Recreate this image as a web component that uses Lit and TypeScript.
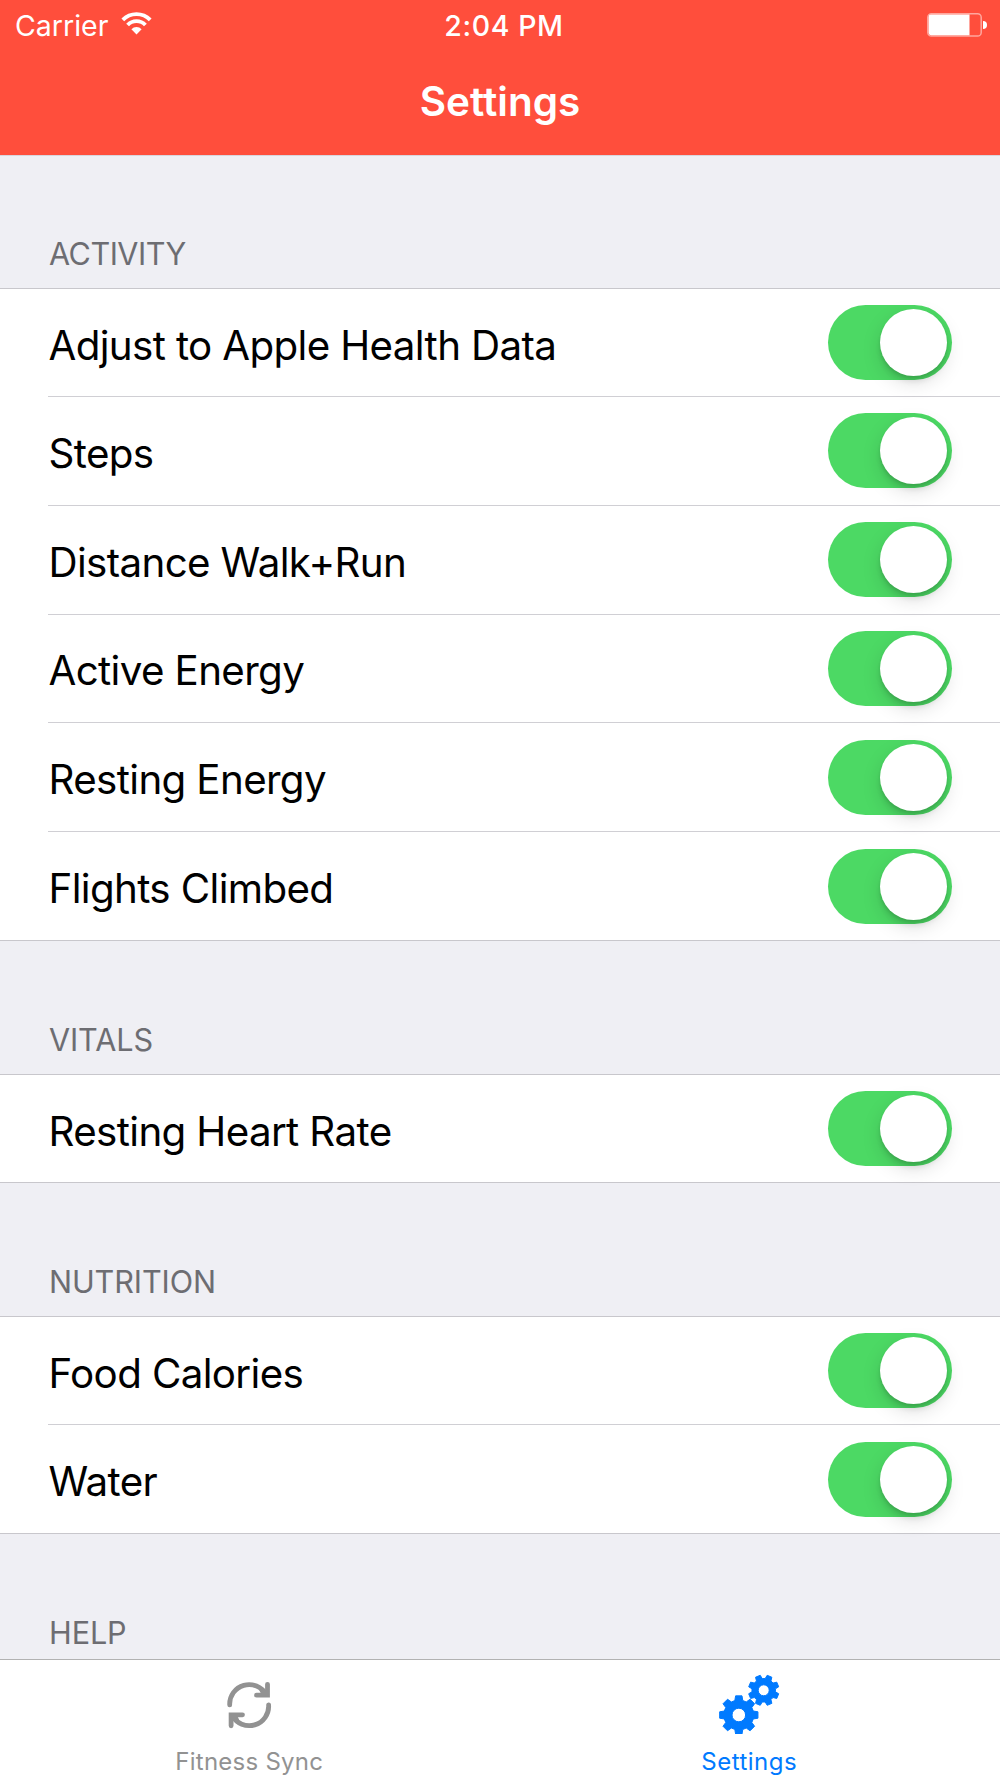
import { LitElement, html, css, svg } from "lit";
import { customElement, property } from "lit/decorators.js";

interface Section {
  title: string;
  rows: string[];
}

const SECTIONS: Section[] = [
  {
    title: "ACTIVITY",
    rows: [
      "Adjust to Apple Health Data",
      "Steps",
      "Distance Walk+Run",
      "Active Energy",
      "Resting Energy",
      "Flights Climbed",
    ],
  },
  { title: "VITALS", rows: ["Resting Heart Rate"] },
  { title: "NUTRITION", rows: ["Food Calories", "Water"] },
  { title: "HELP", rows: [] },
];

/** Outline of a toothed wheel centred on (cx, cy). */
function gearPath(cx: number, cy: number, outer: number, root: number, hole: number, teeth: number, turn: number): string {
  const step = (Math.PI * 2) / teeth;
  const at = (r: number, a: number) => `${(cx + r * Math.cos(a)).toFixed(2)} ${(cy + r * Math.sin(a)).toFixed(2)}`;
  const points: string[] = [];
  for (let i = 0; i < teeth; i++) {
    const a = turn + i * step;
    points.push(at(root, a - step * 0.34), at(outer, a - step * 0.21), at(outer, a + step * 0.21), at(root, a + step * 0.34));
  }
  return `M${points.join("L")}ZM${cx - hole} ${cy}a${hole} ${hole} 0 1 0 ${hole * 2} 0a${hole} ${hole} 0 1 0 ${-hole * 2} 0Z`;
}

@customElement("toggle-switch")
export class ToggleSwitch extends LitElement {
  static styles = css`
    :host { display: block; }
    .track {
      box-sizing: border-box;
      display: flex;
      justify-content: flex-end;
      align-items: center;
      width: 124px;
      height: 75px;
      padding: 0 5px;
      border-radius: 38px;
      background: #4cd964;
    }
    .knob {
      width: 67px;
      height: 67px;
      border-radius: 50%;
      background: #fff;
      box-shadow: 0 7px 19px rgba(0, 0, 0, 0.13), 0 6px 5px rgba(0, 0, 0, 0.07), 0 2px 3px rgba(0, 0, 0, 0.09);
    }
  `;
  render() {
    return html`<div class="track" role="switch" aria-checked="true"><div class="knob"></div></div>`;
  }
}

@customElement("settings-section")
export class SettingsSection extends LitElement {
  @property({ attribute: false }) section!: Section;
  static styles = css`
    :host { display: block; flex: none; }
    .title {
      box-sizing: border-box;
      height: 133px;
      padding: 80px 0 0 49px;
      font-size: 30.6px;
      line-height: 37px;
      letter-spacing: -0.1px;
      color: #6d6d72;
    }
    :host(:first-child) .title { height: 132px; padding-top: 79px; letter-spacing: -0.5px; }
    .rows {
      background: #fff;
      border-top: 1px solid #c8c7cc;
      border-bottom: 1px solid #c8c7cc;
    }
    .row {
      box-sizing: border-box;
      display: flex;
      align-items: center;
      justify-content: space-between;
      height: 108.75px;
      margin-left: 48px;
      padding-right: 48px;
      border-bottom: 1px solid #d0cfd4;
    }
    .row:first-child { height: 108px; }
    .row:last-child { height: 108px; border-bottom: 0; }
    .row:only-child { height: 107px; }
    .label {
      padding: 6px 0 0 0.5px;
      font-size: 40.3px;
      line-height: 50px;
      letter-spacing: -0.63px;
      color: #000;
      white-space: nowrap;
    }
  `;
  render() {
    const { title, rows } = this.section;
    return html`
      <div class="title">${title}</div>
      ${rows.length
        ? html`<div class="rows">
            ${rows.map((r) => html`<div class="row"><span class="label">${r}</span><toggle-switch></toggle-switch></div>`)}
          </div>`
        : null}
    `;
  }
}

@customElement("app-root")
export class AppRoot extends LitElement {
  static styles = css`
    :host {
      display: flex;
      flex-direction: column;
      width: 1000px;
      height: 1778px;
      overflow: hidden;
      background: #efeff4;
      font-family: Inter, "Liberation Sans", sans-serif;
    }
    .header { flex: none; height: 155px; background: #ff4e3c; color: #fff; border-bottom: 1px solid #d8d5dc; }
    .status {
      box-sizing: border-box;
      display: grid;
      grid-template-columns: 1fr auto 1fr;
      align-items: center;
      height: 49px;
      padding: 2px 13px 0 15px;
      font-size: 28.5px;
      line-height: 34px;
    }
    .carrier { display: flex; align-items: center; gap: 12.5px; }
    .wifi { width: 31px; height: 23px; margin-top: -4px; }
    .time { font-weight: 500; letter-spacing: 0.6px; padding-left: 6px; }
    .battery { width: 60px; height: 24px; margin-top: -1px; justify-self: end; }
    .heading { padding-top: 28px; text-align: center; font-size: 40.5px; line-height: 50px; font-weight: 600; }
    .content { flex: 1; min-height: 0; overflow: hidden; }
    .tabs {
      flex: none;
      box-sizing: border-box;
      display: grid;
      grid-template-columns: 1fr 1fr;
      height: 119px;
      background: #fff;
      border-top: 1px solid #b2b2b2;
      color: #929292;
      font-size: 24px;
      line-height: 30px;
      letter-spacing: 0.25px;
    }
    .tab { display: flex; flex-direction: column; align-items: center; }
    .tab.on { color: #007aff; letter-spacing: 0.5px; }
    .icon { width: 70px; height: 64px; margin-top: 10px; }
    .tab-label { margin-top: 13px; padding-right: 1.5px; }
  `;

  render() {
    return html`
      <div class="header">
        <div class="status">
          <div class="carrier">
            <span>Carrier</span>
            <svg class="wifi" viewBox="0 0 31 23" fill="none" stroke="#fff">
              <path d="M1.8 7.8A19.3 19.3 0 0 1 29.2 7.8" stroke-width="3.9" />
              <path d="M6.6 13A12.1 12.1 0 0 1 24.4 13" stroke-width="3.8" />
              <path d="M15.5 22.4L10.4 17.3A7 7 0 0 1 20.6 17.3Z" fill="#fff" stroke="none" />
            </svg>
          </div>
          <span class="time">2:04 PM</span>
          <svg class="battery" viewBox="0 0 60 24">
            <rect x="0.8" y="0.8" width="53.4" height="22.2" rx="3.6" fill="none" stroke="#fff" stroke-opacity="0.5" stroke-width="1.5" />
            <path d="M4 1.6H42.5V22.2H4A2.4 2.4 0 0 1 1.6 19.8V4A2.4 2.4 0 0 1 4 1.6Z" fill="#fff" />
            <path d="M56 8A4 4 0 0 1 56 16Z" fill="#fff" />
          </svg>
        </div>
        <div class="heading">Settings</div>
      </div>
      <div class="content">${SECTIONS.map((s) => html`<settings-section .section=${s}></settings-section>`)}</div>
      <div class="tabs">
        <div class="tab">
          <svg class="icon" viewBox="0 0 70 64" fill="none" stroke="currentColor" stroke-width="4.8" stroke-linecap="round">
            <path d="M14.7 34.8A19.4 19.4 0 0 1 51 24.5" />
            <path d="M41.5 25.2H52.5V14.3M47 20.5L51 24.5" />
            <path d="M53.6 34.8A19.4 19.4 0 0 1 17.2 45.5" />
            <path d="M16.1 55.8V44.8H27.5M17.5 45.5L21.5 49.5" />
          </svg>
          <span class="tab-label">Fitness Sync</span>
        </div>
        <div class="tab on">
          <svg class="icon" viewBox="0 0 70 64" fill="currentColor" fill-rule="evenodd" stroke="currentColor" stroke-width="1" stroke-linejoin="round">
            ${svg`<path d=${gearPath(23.8, 45, 19.4, 15, 6.8, 8, 0)} />
            <path d=${gearPath(48.7, 20.3, 15.4, 11.8, 5.5, 8, Math.PI / 8)} />`}
          </svg>
          <span class="tab-label">Settings</span>
        </div>
      </div>
    `;
  }
}
